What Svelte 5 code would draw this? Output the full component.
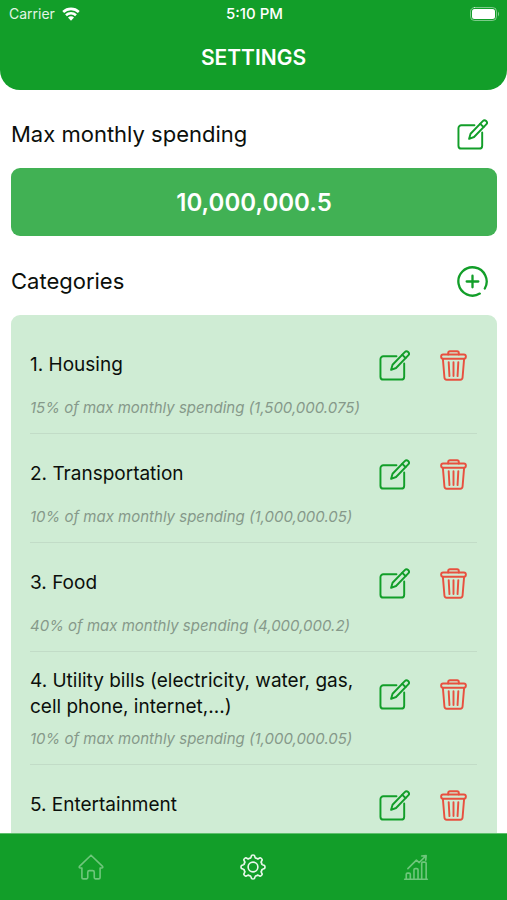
<script lang="ts">
	type Category = { id: number; name: string; percent: number; amount: string };

	let maxSpending = $state('10,000,000.5');

	let categories = $state<Category[]>([
		{ id: 1, name: 'Housing', percent: 15, amount: '1,500,000.075' },
		{ id: 2, name: 'Transportation', percent: 10, amount: '1,000,000.05' },
		{ id: 3, name: 'Food', percent: 40, amount: '4,000,000.2' },
		{ id: 4, name: 'Utility bills (electricity, water, gas, cell phone, internet,...)', percent: 10, amount: '1,000,000.05' },
		{ id: 5, name: 'Entertainment', percent: 10, amount: '1,000,000.05' }
	]);

	let tab = $state('settings');

	function remove(id: number) {
		categories = categories.filter((c) => c.id !== id);
	}

	// outline of the eight-toothed gear, centred on 16,16
	function gearPath() {
		const at = (r: number, deg: number) => {
			const a = (deg * Math.PI) / 180;
			return `${(16 + r * Math.sin(a)).toFixed(2)} ${(16 - r * Math.cos(a)).toFixed(2)}`;
		};
		let d = `M${at(14.4, -7)}`;
		for (let i = 0; i < 8; i++) {
			const t = i * 45;
			d += `Q${at(15.2, t)} ${at(14.4, t + 7)}`;
			d += `L${at(12.6, t + 11)}`;
			d += `Q${at(10.6, t + 16)} ${at(11.8, t + 22.5)}`;
			d += `Q${at(10.6, t + 29)} ${at(12.6, t + 34)}`;
			d += `L${at(14.4, t + 38)}`;
		}
		return d + 'Z';
	}
</script>

{#snippet editIcon()}
	<svg class="edit" viewBox="0 0 32 32" aria-hidden="true">
		<path d="M18 6.500H4.500A3 3 0 0 0 1.500 9.500V27.500A3 3 0 0 0 4.500 30.500H23A3 3 0 0 0 26 27.500V14" />
		<path d="M12.500 20.500L14 15.200L26.600 2.200A2.300 2.300 0 0 1 30.200 5.600L17.600 18.600Z" />
		<path d="M24 5L27.400 8.300" />
	</svg>
{/snippet}

<div class="app">
	<header>
		<div class="status">
			<span class="carrier">
				Carrier
				<svg class="wifi" viewBox="0 0 18 14" aria-hidden="true">
					<path d="M1.200 5A11.300 11.300 0 0 1 16.800 5M4 8.300A7.200 7.200 0 0 1 14 8.300" />
					<path class="dot" d="M6 10.600A4.200 4.200 0 0 1 12 10.600L9 13.700Z" />
				</svg>
			</span>
			<span class="time">5:10 PM</span>
			<svg class="battery" viewBox="0 0 30 14" aria-hidden="true">
				<rect class="shell" x="0.500" y="0.500" width="26" height="13" rx="4" />
				<rect class="level" x="2" y="2" width="23" height="10" rx="2.500" />
				<path class="cap" d="M28 4.500Q30 7 28 9.500Z" />
			</svg>
		</div>
		<h1>SETTINGS</h1>
	</header>

	<main>
		<div class="head">
			<h2>Max monthly spending</h2>
			<button aria-label="Edit max monthly spending">{@render editIcon()}</button>
		</div>
		<div class="max">{maxSpending}</div>

		<div class="head">
			<h2>Categories</h2>
			<button aria-label="Add category">
				<svg class="plus" viewBox="0 0 32 32" aria-hidden="true">
					<path d="M23.500 28.500A14.600 14.600 0 1 1 28.700 23.200M16 10V22M10 16H22" />
				</svg>
			</button>
		</div>
		<ul>
			{#each categories as c, i (c.id)}
				<li>
					<div class="row">
						<h3>{i + 1}. {c.name}</h3>
						<button aria-label="Edit {c.name}">{@render editIcon()}</button>
						<button class="del" aria-label="Delete {c.name}" onclick={() => remove(c.id)}>
							<svg class="trash" viewBox="0 0 28 32" aria-hidden="true">
								<path d="M8.500 4.500V3A1.800 1.800 0 0 1 10.300 1.200H17.700A1.800 1.800 0 0 1 19.500 3V4.500" />
								<rect x="1.200" y="4.500" width="25.600" height="4.500" rx="2" />
								<path d="M3 9.200L4.600 28.400A2.400 2.400 0 0 0 7 30.700H21A2.400 2.400 0 0 0 23.400 28.400L25 9.200" />
								<path d="M9 12.500L9.800 27M14 12.500V27M19 12.500L18.200 27" />
							</svg>
						</button>
					</div>
					<p>{c.percent}% of max monthly spending ({c.amount})</p>
				</li>
			{/each}
		</ul>
	</main>

	<nav>
		<button class:active={tab === 'home'} aria-label="Home" onclick={() => (tab = 'home')}>
			<svg viewBox="0 0 32 32" aria-hidden="true">
				<path d="M16 1.500L1.800 15.300Q0.800 17.200 3 17.200H4.800V28.500Q4.800 30.600 6.900 30.600H10.600Q12 30.600 12 29V22.500Q12 20.500 14 20.500H18Q20 20.500 20 22.500V29Q20 30.600 21.400 30.600H25.100Q27.200 30.600 27.200 28.500V17.200H29Q31.200 17.200 30.200 15.300Z" />
			</svg>
		</button>
		<button class:active={tab === 'settings'} aria-label="Settings" onclick={() => (tab = 'settings')}>
			<svg viewBox="0 0 32 32" aria-hidden="true">
				<path d={gearPath()} />
				<circle cx="16" cy="16" r="6" />
			</svg>
		</button>
		<button class:active={tab === 'stats'} aria-label="Statistics" onclick={() => (tab = 'stats')}>
			<svg viewBox="0 0 32 32" aria-hidden="true">
				<path d="M2 31H30M4 31V25Q4 23.500 5.500 23.500H7.500Q9 23.500 9 25V31M13.500 31V19.500Q13.500 18 15 18H17Q18.500 18 18.500 19.500V31M23 31V11.500Q23 10 24.500 10H27Q28.500 10 28.500 11.500V31" />
				<path d="M6 18L16.500 7.500L20 10.500L27.500 3M23 2.500L28.500 2L28 7.500" />
			</svg>
		</button>
	</nav>
</div>

<style>
	:global(body) {
		background: #fff;
	}
	.app {
		display: flex;
		flex-direction: column;
		height: 100vh;
		font-family: Inter, 'Liberation Sans', sans-serif;
		color: #0b0f0b;
	}
	header {
		flex: none;
		background: #129e29;
		color: #fff;
		border-radius: 0 0 20px 20px;
		padding-bottom: 17px;
	}
	.status {
		display: grid;
		grid-template-columns: 1fr auto 1fr;
		align-items: center;
		height: 27px;
		padding: 0 7px 0 9px;
		font-size: 14px;
	}
	.carrier {
		display: flex;
		align-items: center;
		gap: 7px;
		color: #e3f5e5;
	}
	.time {
		font-size: 15px;
		font-weight: 500;
	}
	.wifi {
		width: 18px;
		height: 14px;
		overflow: visible;
		fill: none;
		stroke: #fff;
		stroke-width: 2.6;
		stroke-linecap: butt;
	}
	.wifi .dot {
		fill: #fff;
		stroke: none;
	}
	.battery {
		justify-self: end;
		width: 30px;
		height: 14px;
		fill: #fff;
	}
	.battery .shell {
		fill: none;
		stroke: #fff;
		opacity: 0.45;
	}
	.battery .cap {
		opacity: 0.5;
	}
	h1,
	h2,
	h3,
	p,
	ul {
		margin: 0;
		padding: 0;
		font-weight: 400;
	}
	h1 {
		padding-top: 16px;
		font-size: 21px;
		line-height: 30px;
		font-weight: 600;
		text-align: center;
	}
	main {
		flex: 1;
		min-height: 0;
		overflow-y: auto;
		scrollbar-width: none;
		padding: 5px 10px 0 11px;
	}
	.head {
		display: flex;
		align-items: center;
		justify-content: space-between;
		padding: 15px 1px 10px 0;
	}
	h2 {
		font-size: 22px;
		line-height: 30px;
	}
	button {
		flex: none;
		display: flex;
		align-items: center;
		justify-content: center;
		width: 48px;
		height: 48px;
		padding: 0;
		border: 0;
		background: none;
		color: #129e29;
		cursor: pointer;
	}
	svg {
		display: block;
		fill: none;
		stroke: currentColor;
		stroke-width: 2;
		stroke-linecap: round;
		stroke-linejoin: round;
	}
	.edit,
	.plus {
		width: 31px;
		height: 31px;
	}
	.plus {
		stroke-width: 2.4;
	}
	.trash {
		width: 27px;
		height: 31px;
	}
	.battery,
	.battery rect {
		stroke-width: 1;
	}
	.battery .level,
	.battery .cap {
		stroke: none;
	}
	.max {
		margin-bottom: 6px;
		border-radius: 9px;
		background: #41b154;
		color: #fff;
		padding: 20px 0 18px;
		font-size: 24px;
		line-height: 30px;
		font-weight: 600;
		text-align: center;
	}
	ul {
		list-style: none;
		border-radius: 9px;
		background: #cfecd4;
		padding: 10px 20px 10px 19px;
	}
	li {
		padding: 16px 0 14px;
		border-bottom: 1px solid #c2dcc7;
	}
	li:last-child {
		border-bottom: 0;
	}
	.row {
		display: flex;
		align-items: center;
		gap: 11px;
		min-height: 48px;
	}
	h3 {
		flex: 1;
		font-size: 19px;
		line-height: 26px;
	}
	.del {
		color: #e8503f;
	}
	p {
		margin-top: 8px;
		font-size: 15px;
		line-height: 22px;
		font-style: italic;
		color: #86998a;
	}
	nav {
		flex: none;
		display: flex;
		justify-content: space-around;
		padding: 9px 10px;
		border-top: 1px solid #5fbf6d;
		background: #129e29;
	}
	nav button {
		flex: 1;
		color: #6ec67b;
	}
	nav .active {
		color: #e9f8eb;
	}
	nav svg {
		width: 26px;
		height: 26px;
	}
</style>
